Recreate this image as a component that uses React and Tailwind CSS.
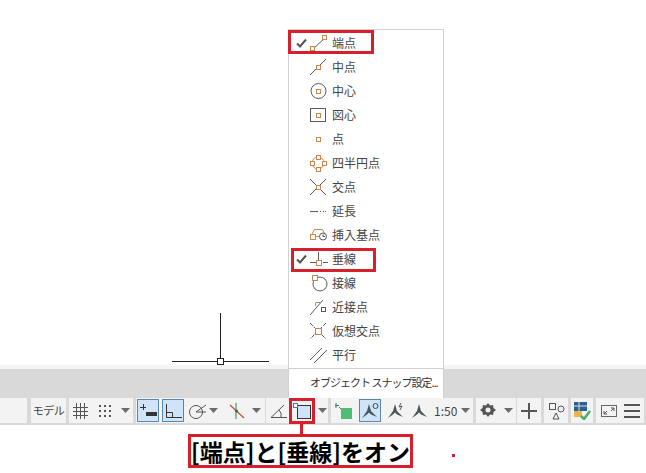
const O = "#c8874f";
const G = "#5a5a5a";
const Sq = ({ x, y, s = 4 }) => <rect x={Math.floor(x) + 0.5} y={Math.floor(y) + 0.5} width={s} height={s} fill="#fff" stroke={O} strokeWidth="1" />;
const icons = [
  <><path d="M3 16L15 5" stroke={G} fill="none" /><Sq x={0} y={13} /><Sq x={12} y={2} /></>,
  <><path d="M0 18L16 2" stroke={G} fill="none" /><Sq x={6} y={8} /></>,
  <><circle cx="8.500" cy="10" r="7.500" stroke={G} fill="none" /><Sq x={6} y={8} /></>,
  <><rect x="0.500" y="3.500" width="15" height="13" stroke={G} fill="none" /><Sq x={6} y={8} /></>,
  <Sq x={6} y={8} />,
  <><circle cx="8" cy="10" r="6" stroke={O} fill="none" /><Sq x={6} y={2} /><Sq x={6} y={14} /><Sq x={0} y={8} /><Sq x={12} y={8} /></>,
  <><path d="M0 2L16 18M16 2L0 18" stroke={G} fill="none" /><Sq x={6} y={8} /></>,
  <path d="M0 10.500H8M10 10.500H11M13 10.500H14M15 10.500H16" stroke={G} fill="none" />,
  <><path d="M2 9L4.500 4.500H12.500L14.500 8" stroke={O} fill="none" /><Sq x={0} y={9} s={5} /><path d="M6 11.500H10" stroke={O} /><circle cx="13" cy="11.500" r="3.500" stroke={G} fill="#fff" /><path d="M13 9.500V11.500H15" stroke={G} fill="none" /></>,
  <><path d="M0 13.500H7M13 13.500H18M8.500 3V11" stroke={G} fill="none" /><Sq x={6} y={11} s={5} /></>,
  <><circle cx="10" cy="11" r="7" stroke={G} fill="none" /><Sq x={2} y={2} s={5} /></>,
  <><path d="M0 18L13 3" stroke={G} fill="none" /><path d="M6 5.500H10M5.500 5.500V9" stroke={O} fill="none" /><rect x="11.500" y="10.500" width="4" height="4" fill="#fff" stroke={G} /></>,
  <><path d="M0 2L16 18M16 2L0 18" stroke={G} strokeDasharray="4 1.500" fill="none" /><Sq x={5} y={7} s={6} /></>,
  <path d="M0 15L12 3M4 18L17 5" stroke={G} fill="none" />,
];
const rows = ["端点", "中点", "中心", "図心", "点", "四半円点", "交点", "延長", "挿入基点", "垂線", "接線", "近接点", "仮想交点", "平行"];
const Caret = ({ cls = "" }) => <svg width="9" height="5" viewBox="0 0 9 5" className={`shrink-0 ${cls}`}><path d="M0 0H9L4.500 5Z" fill="#6b6b6b" /></svg>;
const Ic = ({ children, w = 18, active, cls = "" }) => (
  <span className={`flex items-center justify-center h-[23px] shrink-0 ${active ? "w-[22px] bg-[#cfe4f8] border border-[#5b87ab]" : ""} ${cls}`}>
    <svg width={w} height="18" viewBox={`0 0 ${w} 18`} className="shrink-0">{children}</svg>
  </span>
);
const Group = ({ children, cls = "" }) => <div className={`h-[25px] bg-[#f3f3f3] flex items-center shrink-0 ${cls}`}>{children}</div>;
const K = "#555";
const Arrow = () => <path d="M8 2L10 9L16 15L10 12.500L8 10.500L6 12.500L1 16L6 9Z" fill="#4a565e" />;

export default function App() {
  return (
    <div className="relative w-[646px] h-[473px] bg-white overflow-hidden" style={{ fontFamily: '"Noto Sans CJK JP", "Noto Sans", sans-serif' }}>
      <div className="h-[365px] relative">
        <div className="absolute left-[172px] top-[361px] w-[97px] h-px bg-[#222]" />
        <div className="absolute left-[220px] top-[313px] w-px h-[48px] bg-[#222]" />
        <div className="absolute left-[217px] top-[358px] w-[7px] h-[7px] bg-white border border-[#222]" />
      </div>
      <div className="h-[4px] bg-[#f4f4f4]" />
      <div className="h-[29px] bg-[#d9d9d9]" />
      <div className="h-[27px] bg-[#d9d9d9] flex items-start">
        <Group cls="w-[27px]" />
        <Group cls="w-[35px] ml-[4px] justify-center text-[11px] tracking-[-0.5px] text-[#444]">モデル</Group>
        <Group cls="w-[64px] ml-[3px]">
          <Ic w={15} cls="ml-[4px]"><path d="M0 5.500H15M0 9.500H15M0 13.500H15M3.500 1V17M7.500 1V17M11.500 1V17" stroke={K} fill="none" /></Ic>
          <Ic w={14} cls="ml-[10px]"><path d="M1 4H14M1 9H14M1 14H14" stroke={K} strokeWidth="2" strokeDasharray="2 3" fill="none" /></Ic>
          <Caret cls="ml-[9px]" />
        </Group>
        <Group cls="w-[129px] ml-[3px]">
          <Ic w={20} active cls="ml-[1px]"><path d="M2 5.500H8M5.500 2V8" stroke="#333" fill="none" /><rect x="8" y="10" width="11" height="4" fill="#333" /></Ic>
          <Ic w={20} active cls="ml-[3px]"><path d="M3.500 2V15.500H19M3.500 10.500H9.500V15.500" stroke="#333" fill="none" /></Ic>
          <Ic w={17} cls="ml-[5px]"><circle cx="7" cy="10" r="6.500" stroke={K} fill="none" /><path d="M7 10L17 3M7 10H17" stroke={K} fill="none" /></Ic>
          <Caret cls="ml-[3px]" />
          <Ic w={16} cls="ml-[11px]"><path d="M7 1V17" stroke="#3aa55c" fill="none" strokeWidth="1.200" /><path d="M1 3L15 16" stroke="#c74a4a" fill="none" strokeWidth="1.200" /><circle cx="7.500" cy="9" r="1.500" fill="#555" /></Ic>
          <Caret cls="ml-[7px]" />
        </Group>
        <Group cls="w-[62px] ml-[1px]">
          <Ic w={17} cls="ml-[4px]"><path d="M1 15.500H17M1 15.500L14 3" stroke={K} fill="none" /><path d="M9 8Q12 11 11 15" stroke={K} fill="none" /></Ic>
          <Ic w={18} cls="ml-[6px]"><rect x="4.500" y="3.500" width="13" height="13" fill="#cfe4f8" stroke="#333" /><rect x="0.500" y="1.500" width="4" height="4" fill="#fff" stroke="#4a7aa0" /></Ic>
          <Caret cls="ml-[7px]" />
        </Group>
        <Group cls="w-[142px] ml-[3px]">
          <Ic w={17} cls="ml-[4px]"><path d="M1 1V6M0 3.500H4M4 5L8 9" stroke="#3b7a4c" fill="none" /><rect x="6" y="6" width="11" height="11" fill="#4fbe74" /></Ic>
          <Ic w={19} active cls="ml-[7px]"><Arrow /><circle cx="14.500" cy="4" r="2.500" fill="#cfe4f8" stroke="#3a4650" /></Ic>
          <Ic w={16} cls="ml-[6px]"><Arrow /><path d="M14 1L12 5L15 4L13 8" stroke="#4e5a62" fill="none" /></Ic>
          <Ic w={16} cls="ml-[8px]"><Arrow /></Ic>
          <span className="ml-[7px] w-[24px] text-[12px] text-[#444] leading-none">1:50</span>
          <Caret cls="ml-[3px]" />
        </Group>
        <Group cls="w-[40px] ml-[3px]">
          <Ic w={16} cls="ml-[4px]"><path d="M8 1L10 3.500L13 3L13.500 6L16 8L13.500 10L13 13L10 12.500L8 15L6 12.500L3 13L2.500 10L0 8L2.500 6L3 3L6 3.500Z" fill="#555" /><circle cx="8" cy="8" r="2.500" fill="#f3f3f3" /></Ic>
          <Caret cls="ml-[8px]" />
        </Group>
        <Group cls="w-[24px] ml-[1px] justify-center">
          <Ic w={16}><path d="M0 9H16M8 1V17" stroke="#555" strokeWidth="2" fill="none" /></Ic>
        </Group>
        <Group cls="w-[24px] ml-[3px] justify-center">
          <Ic w={17}><rect x="1.500" y="1.500" width="6" height="6" fill="none" stroke="#555" /><circle cx="13" cy="7" r="3" fill="none" stroke="#555" /><path d="M5 17H11L8 11Z" fill="none" stroke="#555" /></Ic>
        </Group>
        <Group cls="w-[22px] ml-[3px] justify-center">
          <Ic w={17}><rect x="0" y="0" width="13" height="9" fill="#2d5f94" /><rect x="0" y="9" width="8" height="6" fill="#e6b84a" /><path d="M7 14L10 17L16 9" stroke="#4caf6a" strokeWidth="2.500" fill="none" /><path d="M0 4H13M5 0V9" stroke="#cfe0ef" fill="none" /></Ic>
        </Group>
        <Group cls="w-[48px] ml-[3px]">
          <Ic w={16} cls="ml-[5px]"><rect x="0.500" y="3.500" width="15" height="11" fill="none" stroke="#666" /><path d="M3 12L6 9M3 9V12H6M13 6L10 9M13 9V6H10" stroke="#555" fill="none" /></Ic>
          <Ic w={16} cls="ml-[7px]"><path d="M0 3H16M0 9H16M0 15H16" stroke="#555" strokeWidth="2" fill="none" /></Ic>
        </Group>
      </div>

      {/* popup menu */}
      <div className="absolute left-[288px] top-[29px] w-[156px] h-[369px] bg-white border border-[#d0d0d0] border-b-0 flex flex-col pt-[1px]">
        {rows.map((r, i) => (
          <div key={r} className="h-[24px] flex items-center shrink-0">
            <span className="w-[21px] flex justify-end pr-[3px]">
              {(i === 0 || i === 9) && <svg width="11" height="10" viewBox="0 0 11 10"><path d="M1 5.500L4 8.500L10 1.500" stroke="#555" strokeWidth="2" fill="none" /></svg>}
            </span>
            <svg width="18" height="20" viewBox="0 0 18 20" className="shrink-0">{icons[i]}</svg>
            <span className="ml-[4px] text-[12px] text-[#444] leading-none">{r}</span>
          </div>
        ))}
        <div className="h-px bg-[#d0d0d0] mt-[1px]" />
        <div className="h-[27px] flex items-center pl-[21px] text-[11px] text-[#333] leading-none tracking-[-1px] whitespace-nowrap">オブジェクト スナップ設定...</div>
      </div>

      {/* callouts */}
      <div className="absolute left-[288px] top-[30px] w-[86px] h-[24px] border-[3px] border-[#d8202c]" />
      <div className="absolute left-[291px] top-[248px] w-[85px] h-[24px] border-[3px] border-[#d8202c]" />
      <div className="absolute left-[289px] top-[398px] w-[26px] h-[26px] border-[3px] border-[#d8202c]" />
      <div className="absolute left-[300px] top-[424px] w-[3px] h-[11px] bg-[#d8202c]" />
      <div className="absolute left-[188px] top-[434px] w-[225px] h-[34px] border-[3px] border-[#d8202c] bg-white flex items-center justify-center text-[23px] font-bold text-black leading-none whitespace-nowrap">[端点]と[垂線]をオン</div>
      <div className="absolute left-[452px] top-[454px] w-[3px] h-[3px] bg-[#d8202c]" />
    </div>
  );
}
